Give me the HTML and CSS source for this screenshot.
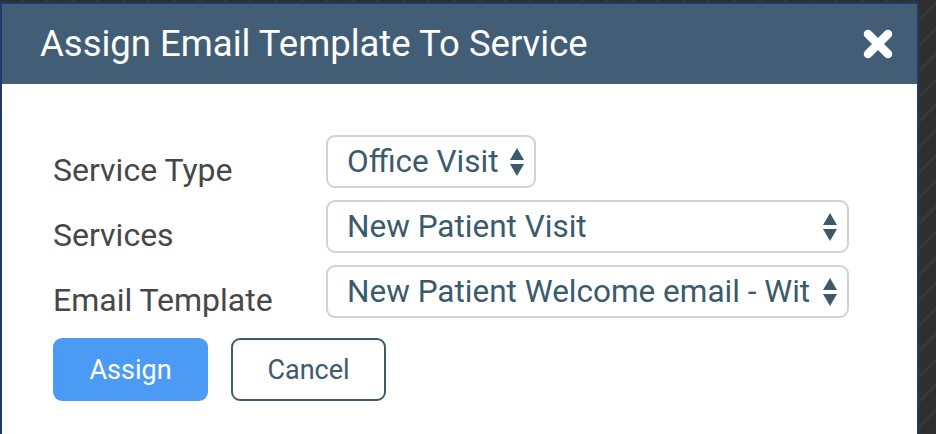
FILE: index.html
```html
<!DOCTYPE html>
<html lang="en">
<head>
    <meta charset="UTF-8">
    <meta name="viewport" content="width=device-width, initial-scale=1.0">
    <title>Assign Email Template To Service</title>
    <link rel="stylesheet" href="styles.css">
</head>
<body>
    <div class="modal">
        <div class="modal-header">
            <h1>Assign Email Template To Service</h1>
            <span class="close-btn" title="Close">
                <svg width="30" height="30" viewBox="0 0 30 30">
                    <path d="M5 5 L25 25 M25 5 L5 25" stroke="#fff" stroke-width="8.5" stroke-linecap="round" fill="none"/>
                </svg>
            </span>
        </div>

        <div class="modal-body">
            <div class="form-row">
                <label>Service Type</label>
                <div class="select select-small">
                    <span class="select-text">Office Visit</span>
                    <svg class="arrows" width="14" height="28" viewBox="0 0 14 28">
                        <path d="M7 0 L14 12 L0 12 Z M0 16 L14 16 L7 28 Z" fill="#3b5a6c"/>
                    </svg>
                </div>
            </div>
            <div class="form-row">
                <label>Services</label>
                <div class="select">
                    <span class="select-text">New Patient Visit</span>
                    <svg class="arrows" width="14" height="28" viewBox="0 0 14 28">
                        <path d="M7 0 L14 12 L0 12 Z M0 16 L14 16 L7 28 Z" fill="#3b5a6c"/>
                    </svg>
                </div>
            </div>
            <div class="form-row">
                <label>Email Template</label>
                <div class="select">
                    <span class="select-text">New Patient Welcome email - Wit</span>
                    <svg class="arrows" width="14" height="28" viewBox="0 0 14 28">
                        <path d="M7 0 L14 12 L0 12 Z M0 16 L14 16 L7 28 Z" fill="#3b5a6c"/>
                    </svg>
                </div>
            </div>

            <div class="actions">
                <button class="btn btn-primary">Assign</button>
                <button class="btn btn-outline">Cancel</button>
            </div>
        </div>
    </div>
</body>
</html>
```

FILE: styles.css
```css
body {
    margin: 0;
    height: 434px;
    overflow: hidden;
    font-family: Roboto, "Liberation Sans", sans-serif;
    background: repeating-linear-gradient(135deg, #2f2f2f 0px, #2f2f2f 14px, #3b3b3b 16px, #2f2f2f 18px);
}
.modal {
    width: 915px;
    margin-top: 2px;
    height: 440px;
    background: #fff;
    border: 2px solid #1d3b6a;
}
.modal-header {
    height: 80px;
    background: #425e77;
    display: flex;
    align-items: center;
    justify-content: space-between;
    padding: 0 24px 0 38px;
}
.modal-header h1 {
    margin: 0;
    font-size: 36.5px;
    line-height: 1;
    font-weight: 400;
    color: #fff;
}
.close-btn {
    display: flex;
}
.modal-body {
    padding: 51px 0 0 51px;
}
.form-row {
    display: grid;
    grid-template-columns: 273px auto;
    align-items: center;
    margin-bottom: 12px;
}
.form-row label {
    font-size: 32px;
    line-height: 1;
    padding-top: 16px;
    color: #474747;
}
.select {
    width: 523px;
    height: 53px;
    box-sizing: border-box;
    border: 2px solid #d2d2d2;
    border-radius: 9px;
    display: flex;
    align-items: center;
    padding: 0 10px 0 19px;
    gap: 6px;
}
.select-small {
    width: 210px;
}
.select-text {
    flex: 1;
    font-size: 31.5px;
    color: #3b5a6c;
    white-space: nowrap;
}
.arrows {
    flex: none;
}
.actions {
    display: flex;
    gap: 23px;
    margin-top: 20px;
}
.btn {
    width: 155px;
    height: 63px;
    border-radius: 9px;
    font-family: Roboto, "Liberation Sans", sans-serif;
    font-size: 27px;
    cursor: pointer;
}
.btn-primary {
    background: #4b9bf5;
    border: none;
    color: #fff;
}
.btn-outline {
    background: #fff;
    border: 2px solid #3d5a6e;
    color: #3d5a6e;
}
```
